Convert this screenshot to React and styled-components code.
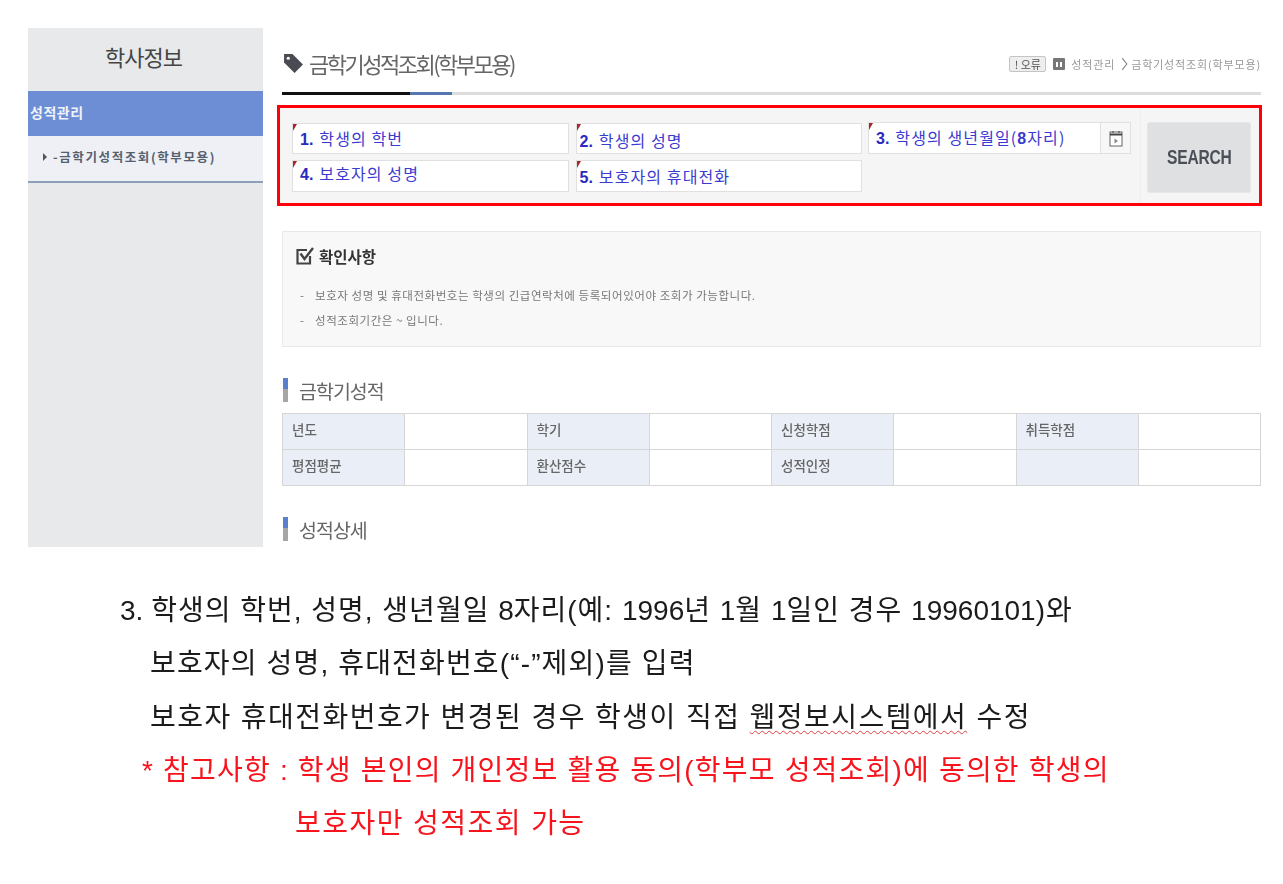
import React from 'react';
import styled, { createGlobalStyle } from 'styled-components';

const GlobalStyle = createGlobalStyle`
  html, body { margin: 0; padding: 0; background: #fff; }
  body { font-family: "Noto Sans CJK KR", "Liberation Sans", sans-serif; color: #333; }
`;

const infoRows = [
  ['년도', '학기', '신청학점', '취득학점'],
  ['평점평균', '환산점수', '성적인정', ''],
];

export default function App() {
  return (
    <Page>
      <GlobalStyle />
      <Capture>
        <Sidebar>
          <SideTitle>학사정보</SideTitle>
          <SideGroup>성적관리</SideGroup>
          <SideItem>
            <Caret />
            -금학기성적조회(학부모용)
          </SideItem>
        </Sidebar>

        <Main>
          <Inset>
            <Header>
              <TitleWrap>
                <svg width="21" height="21" viewBox="0 0 20 20">
                  <path d="M1 1h8l10 10-8 8L1 9z" fill="#4a4a52" />
                  <circle cx="5" cy="5" r="1.500" fill="#fff" />
                </svg>
                <PageTitle>금학기성적조회(학부모용)</PageTitle>
              </TitleWrap>
              <Crumbs>
                <ErrorChip>! 오류</ErrorChip>
                <HomeIcon viewBox="0 0 12 12">
                  <rect width="12" height="12" rx="1" fill="#777" />
                  <path d="M3 9V4h2v5zM7 9V4h2v5z" fill="#fff" />
                </HomeIcon>
                <span>성적관리</span>
                <Chevron viewBox="0 0 6 12">
                  <path d="M1 1l4 5-4 5" fill="none" stroke="#888" strokeWidth="1" />
                </Chevron>
                <span>금학기성적조회(학부모용)</span>
              </Crumbs>
            </Header>
            <TabLine>
              <TabBlack />
              <TabBlue />
            </TabLine>
          </Inset>

          <SearchBox>
            <FieldGrid>
              <Field>
                <FieldLabel $top={2} $left={7}><FieldNum>1.</FieldNum>학생의 학번</FieldLabel>
              </Field>
              <Field>
                <FieldLabel $top={4} $left={3}><FieldNum>2.</FieldNum>학생의 성명</FieldLabel>
              </Field>
              <Field $raised>
                <FieldLabel $top={2} $left={7}><FieldNum>3.</FieldNum>학생의 생년월일(<b>8</b>자리)</FieldLabel>
                <CalendarCell>
                  <svg width="14" height="17" viewBox="0 0 14 17">
                    <rect x="1" y="2" width="12" height="14" fill="#fff" stroke="#666" />
                    <path d="M1 4.500h12" stroke="#444" strokeWidth="2" />
                    <path d="M4 1v2M10 1v2" stroke="#444" />
                    <path d="M5.500 8.500l3.500 2.500-3.500 2.500z" fill="#888" />
                  </svg>
                </CalendarCell>
              </Field>
              <Field>
                <FieldLabel $top={0} $left={7}><FieldNum>4.</FieldNum>보호자의 성명</FieldLabel>
              </Field>
              <Field>
                <FieldLabel $top={3} $left={3}><FieldNum>5.</FieldNum>보호자의 휴대전화</FieldLabel>
              </Field>
            </FieldGrid>
            <SearchCell>
              <SearchButton>
                <SearchLabel>SEARCH</SearchLabel>
              </SearchButton>
            </SearchCell>
          </SearchBox>

          <Inset>
            <Notice>
              <NoticeHead>
                <svg width="19" height="18" viewBox="0 0 19 18">
                  <path d="M14 9v7.500H1.500V3H11" fill="none" stroke="#444" strokeWidth="2.200" />
                  <path d="M4.500 6.500l4 5.500L17 1" fill="none" stroke="#444" strokeWidth="2.400" />
                </svg>
                확인사항
              </NoticeHead>
              <NoticeLine>보호자 성명 및 휴대전화번호는 학생의 긴급연락처에 등록되어있어야 조회가 가능합니다.</NoticeLine>
              <NoticeLine>성적조회기간은 ~ 입니다.</NoticeLine>
            </Notice>

            <SectionTitle>금학기성적</SectionTitle>
            <InfoTable>
              <tbody>
                {infoRows.map((row, i) => (
                  <tr key={i}>
                    {row.map((label, j) => (
                      <React.Fragment key={j}>
                        <InfoHead>{label}</InfoHead>
                        <InfoCell />
                      </React.Fragment>
                    ))}
                  </tr>
                ))}
              </tbody>
            </InfoTable>
            <SectionTitle>성적상세</SectionTitle>
          </Inset>
        </Main>
      </Capture>

      <Steps>
        <StepLine $indent={120} $spacing={1}>
          <Num>3. </Num>학생의 학번, 성명, 생년월일 <Num>8</Num>자리(예: <Num>1996</Num>년 <Num>1</Num>월 <Num>1</Num>일인 경우 <Num>19960101</Num>)와
        </StepLine>
        <StepLine $indent={150} $spacing={1.15}>보호자의 성명, 휴대전화번호(“-”제외)를 입력</StepLine>
        <StepLine $indent={150} $spacing={1.45}>
          보호자 휴대전화번호가 변경된 경우 학생이 직접 <Wavy>웹정보시스템에서</Wavy> 수정
        </StepLine>
        <StepLine $indent={142} $spacing={1.2} $red>* 참고사항 : 학생 본인의 개인정보 활용 동의(학부모 성적조회)에 동의한 학생의</StepLine>
        <StepLine $indent={295} $spacing={1.45} $red>보호자만 성적조회 가능</StepLine>
      </Steps>
    </Page>
  );
}

const Page = styled.div`
  width: 1283px;
  height: 884px;
  overflow: hidden;
  padding-top: 28px;
  box-sizing: border-box;
`;

const Capture = styled.div`
  display: flex;
  gap: 14px;
  margin-left: 28px;
  filter: blur(0.55px);
`;

const Sidebar = styled.div`
  width: 235px;
  height: 519px;
  background: #e8e9eb;
`;

const SideTitle = styled.div`
  height: 55px;
  padding: 0 4px 8px 0;
  display: flex;
  align-items: center;
  justify-content: center;
  font-size: 22px;
  letter-spacing: -1px;
  color: #444;
`;

const SideGroup = styled.div`
  height: 45px;
  line-height: 43px;
  background: #6d8ed4;
  color: #f0f3fa;
  font-size: 14px;
  font-weight: 700;
  letter-spacing: 0.5px;
  padding-left: 2px;
`;

const SideItem = styled.div`
  height: 47px;
  padding-bottom: 4px;
  box-sizing: border-box;
  display: flex;
  align-items: center;
  background: #eef0f5;
  border-bottom: 2px solid #8ea0b8;
  font-size: 12.500px;
  font-weight: 700;
  letter-spacing: 1.600px;
  color: #55606e;
  padding-left: 15px;
  gap: 6px;
`;

const Caret = styled.span`
  width: 0;
  height: 0;
  border-left: 4px solid #555;
  border-top: 4px solid transparent;
  border-bottom: 4px solid transparent;
`;

const Main = styled.div`
  width: 985px;
`;

const Inset = styled.div`
  margin: 0 1px 0 5px;
`;

const Header = styled.div`
  height: 64px;
  display: flex;
  justify-content: space-between;
  align-items: flex-end;
  padding-bottom: 15px;
  box-sizing: border-box;
`;

const TitleWrap = styled.div`
  display: flex;
  align-items: center;
  gap: 5px;
  margin-left: 1px;
`;

const PageTitle = styled.div`
  font-size: 22px;
  line-height: 28px;
  letter-spacing: -2.500px;
  color: #666;
`;

const Crumbs = styled.div`
  display: flex;
  align-items: center;
  gap: 6px;
  font-size: 11px;
  letter-spacing: 0.85px;
  color: #999;
  padding-bottom: 5px;
`;

const ErrorChip = styled.span`
  width: 37px;
  box-sizing: border-box;
  text-align: center;
  border: 1px solid #c4c4c4;
  background: #eee;
  color: #555;
  border-radius: 2px;
  font-size: 11px;
  letter-spacing: 0;
  line-height: 14px;
  margin-right: 1px;
`;

const HomeIcon = styled.svg`
  width: 12px;
  height: 12px;
`;

const Chevron = styled.svg`
  width: 7px;
  height: 14px;
  margin-right: -3px;
`;

const TabLine = styled.div`
  display: flex;
  height: 3px;
  background: #dcdcdc;
`;

const TabBlack = styled.div`
  width: 128px;
  background: #111;
`;

const TabBlue = styled.div`
  width: 42px;
  background: #5577b0;
`;

const SearchBox = styled.div`
  display: flex;
  margin-top: 10px;
  height: 101px;
  box-sizing: border-box;
  border: 3px solid #ff0008;
  background: #f5f5f6;
  padding: 15px 8px 9px 12px;
`;

const FieldGrid = styled.div`
  display: grid;
  grid-template-columns: 277px 286px 263px;
  grid-template-rows: 31px 32px;
  column-gap: 6.500px;
  row-gap: 6px;
  width: 839px;
`;

const Field = styled.div`
  position: relative;
  display: flex;
  background: #fff;
  border: 1px solid #e0e0e0;
  box-sizing: border-box;
  margin-top: ${(p) => (p.$raised ? '-1px' : '0')};

  &::before {
    content: '';
    position: absolute;
    left: 0;
    top: 0;
    border-top: 7px solid #a8262c;
    border-right: 4px solid transparent;
  }
`;

const FieldLabel = styled.div`
  flex: 1;
  padding: ${(p) => p.$top}px 0 0 ${(p) => p.$left}px;
  font-size: 16px;
  line-height: 24px;
  letter-spacing: 1.100px;
  color: #3a3ad0;
  white-space: nowrap;

  b {
    font-family: "Liberation Sans", sans-serif;
  }
`;

const FieldNum = styled.b`
  font-family: "Liberation Sans", sans-serif;
  letter-spacing: 0;
  margin-right: 6px;
  color: #2a2abf;
`;

const CalendarCell = styled.div`
  width: 29px;
  display: flex;
  align-items: center;
  justify-content: center;
  background: #f7f7f7;
  border-left: 1px solid #e0e0e0;
`;

const SearchCell = styled.div`
  flex: 1;
  margin: -15px 0 -9px 9px;
  padding: 14px 0 0 6px;
  border-left: 1px solid #eee;
`;

const SearchButton = styled.div`
  width: 104px;
  height: 71px;
  display: flex;
  align-items: center;
  justify-content: center;
  background: #dfe0e2;
  border: 1px solid #e6e6e6;
  border-radius: 3px;
  box-sizing: border-box;
`;

const SearchLabel = styled.span`
  display: inline-block;
  font-family: "Liberation Sans", sans-serif;
  font-size: 20px;
  font-weight: 700;
  letter-spacing: -0.3px;
  color: #4b4f57;
  transform: scaleX(0.78);
`;

const Notice = styled.div`
  margin-top: 25px;
  height: 116px;
  box-sizing: border-box;
  background: #f8f8f8;
  border: 1px solid #e8e8e8;
  padding: 12px 13px;
`;

const NoticeHead = styled.div`
  display: flex;
  align-items: center;
  gap: 4px;
  height: 24px;
  font-size: 15.500px;
  font-weight: 700;
  color: #333;
  margin-bottom: 15px;
`;

const NoticeLine = styled.div`
  position: relative;
  padding-left: 19px;
  font-size: 11.500px;
  line-height: 25px;
  letter-spacing: 0.55px;
  color: #777;

  &::before {
    content: '-';
    position: absolute;
    left: 4px;
  }
`;

const SectionTitle = styled.div`
  display: flex;
  align-items: center;
  margin-top: 28px;
  height: 30px;
  font-size: 19.500px;
  letter-spacing: -1px;
  color: #666;

  &::before {
    content: '';
    width: 5px;
    height: 24px;
    margin: 0 11px 0 1px;
    background: linear-gradient(#5a7fcc 0 45%, #a6a6a6 45%);
  }
`;

const InfoTable = styled.table`
  margin-top: 8px;
  width: 979px;
  height: 73px;
  border-collapse: collapse;
  table-layout: fixed;
`;

const InfoHead = styled.th`
  background: #e9eef7;
  border: 1px solid #d6d6d6;
  padding: 0 0 5px 9px;
  text-align: left;
  font-size: 13.500px;
  font-weight: 500;
  color: #666;
`;

const InfoCell = styled.td`
  background: #fff;
  border: 1px solid #d6d6d6;
`;

const Steps = styled.div`
  margin-top: 37px;
  filter: blur(0.3px);
`;

const StepLine = styled.div`
  height: 53.300px;
  line-height: 53px;
  padding-left: ${(p) => p.$indent}px;
  font-family: "Liberation Sans", "Noto Sans CJK KR", sans-serif;
  font-size: 28px;
  letter-spacing: ${(p) => p.$spacing}px;
  white-space: pre;
  color: ${(p) => (p.$red ? '#f8141c' : '#1b1b1b')};
`;

const Num = styled.span`
  letter-spacing: 0;
`;

const Wavy = styled.span`
  text-decoration: underline wavy #e04040 1px;
  text-underline-offset: 3px;
`;
